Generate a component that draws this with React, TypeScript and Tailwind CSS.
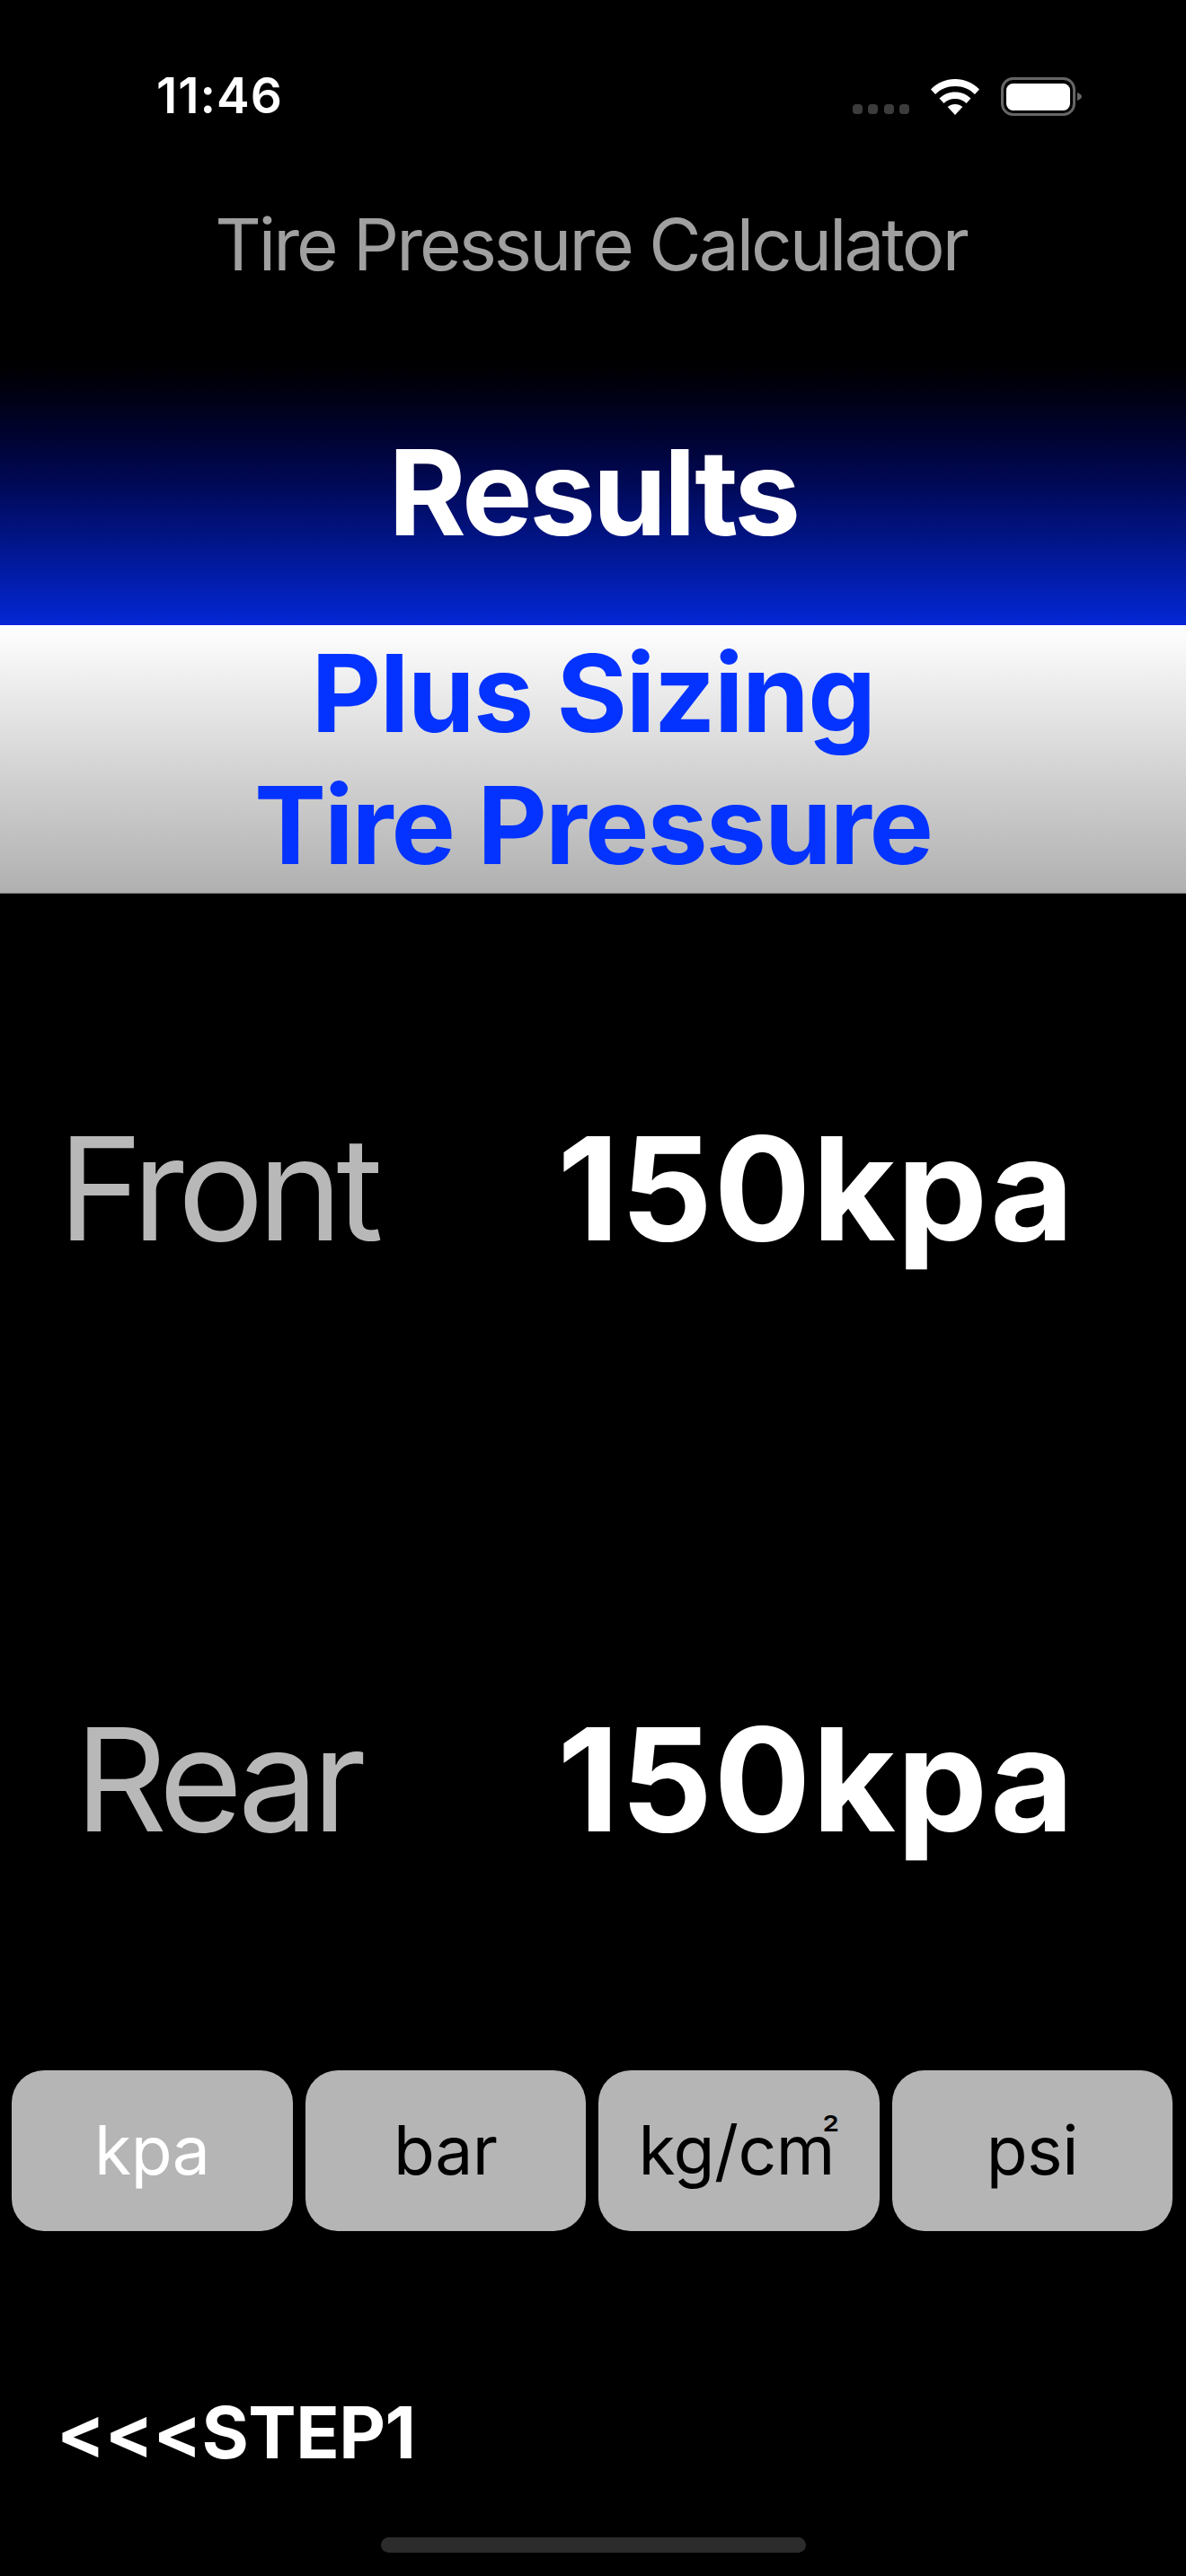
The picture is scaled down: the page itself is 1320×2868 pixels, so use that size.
import React from 'react';

const UNITS = ['kpa', 'bar', 'kg/cm', 'psi'];

const Result = ({ label, value, className }: { label: string; value: string; className: string }) => (
  <div className={`flex items-center ${className}`}>
    <div className="w-[484px] text-center text-[160px] leading-[194px] tracking-[-7px] text-[#b8b8b8]">{label}</div>
    <div className="w-[836px] pl-[13px] text-center text-[160px] leading-[194px] tracking-[1.5px] font-bold text-white">{value}</div>
  </div>
);

const App: React.FC = () => {
  return (
    <div className="w-[1320px] h-[2868px] bg-black overflow-hidden font-['Inter',sans-serif]">
      <div className="flex justify-between items-end h-[128px] pl-[174px] pr-[116px]">
        <span className="text-[55px] leading-[44px] tracking-[1px] font-semibold text-white">11:46</span>
        <div className="flex items-end gap-[24px]">
          <div className="flex gap-[6.5px] mb-[1px]">
            <span className="w-[11px] h-[11px] rounded-[4px] bg-[#3c3c3c]" />
            <span className="w-[11px] h-[11px] rounded-[4px] bg-[#3c3c3c]" />
            <span className="w-[11px] h-[11px] rounded-[4px] bg-[#3c3c3c]" />
            <span className="w-[11px] h-[11px] rounded-[4px] bg-[#3c3c3c]" />
          </div>
          <svg width="54" height="40" viewBox="0 0 54 40" fill="#fff">
            <path d="M27 0C16.5 0 7.5 4 0 11.5L5 17C11 11 18.5 8 27 8S43 11 49 17L54 11.5C46.5 4 37.5 0 27 0Z" />
            <path d="M27 14.5C20 14.5 14.5 17 9.5 21.5L14.5 27C18 23.8 22 22 27 22S36 23.8 39.5 27L44.5 21.5C39.5 17 34 14.5 27 14.5Z" />
            <path d="M27 28C24 28 21 29 18.7 31L27 40L35.3 31C33 29 30 28 27 28Z" />
          </svg>
          <svg width="90" height="43" viewBox="0 0 90 43" className="mb-[-1px]">
            <rect x="1.5" y="1.5" width="80" height="40" rx="12" fill="none" stroke="#666" strokeWidth="3" />
            <rect x="6" y="7" width="71" height="30" rx="7.5" fill="#fff" />
            <path d="M85 17C88 18 90 20 90 21.5S88 25 85 26Z" fill="#666" />
          </svg>
        </div>
      </div>

      <h1 className="mt-[95px] pr-[5px] text-center text-[80px] leading-[97px] tracking-[-3px] text-[#a0a0a0]">Tire Pressure Calculator</h1>

      <div className="mt-[50px] h-[326px] pt-[30px] flex items-center justify-center bg-gradient-to-b from-black to-[#0427d6] border-b border-[#0a1fe6]">
        <h2 className="text-[132px] leading-[160px] tracking-[-3.3px] font-bold text-white">Results</h2>
      </div>

      <div className="h-[299px] pt-[2px] bg-gradient-to-b from-white to-[#b0b0b0] border-b border-[#777] text-center text-[120px] leading-[147px] font-bold text-[#0433ff]">
        <div className="tracking-[-1.5px]">Plus Sizing</div>
        <div className="tracking-[-2px]">Tire Pressure</div>
      </div>

      <Result label="Front" value="150kpa" className="mt-[231px]" />
      <Result label="Rear" value="150kpa" className="mt-[464px]" />

      <div className="mt-[227px] pl-[13px] pr-[15px] grid grid-cols-4 gap-[14px]">
        {UNITS.map((u, i) => (
          <button
            key={u}
            className={`h-[179px] rounded-[36px] bg-[#b5b5b5] text-center text-[75px] tracking-[-0.5px] ${i === 0 ? 'text-white' : 'text-black'}`}
          >
            {u}
            {u === 'kg/cm' && <span className="relative -top-[29px] -ml-[14px] text-[44px]">²</span>}
          </button>
        ))}
      </div>

      <div className="mt-[175px] pl-[63px] text-[80px] leading-[97px] tracking-[-0.5px] font-bold text-white">&lt;&lt;&lt;STEP1</div>

      <div className="mx-auto mt-[69px] w-[473px] h-[17px] rounded-full bg-[#2c2c2c]" />
    </div>
  );
};

export default App;
